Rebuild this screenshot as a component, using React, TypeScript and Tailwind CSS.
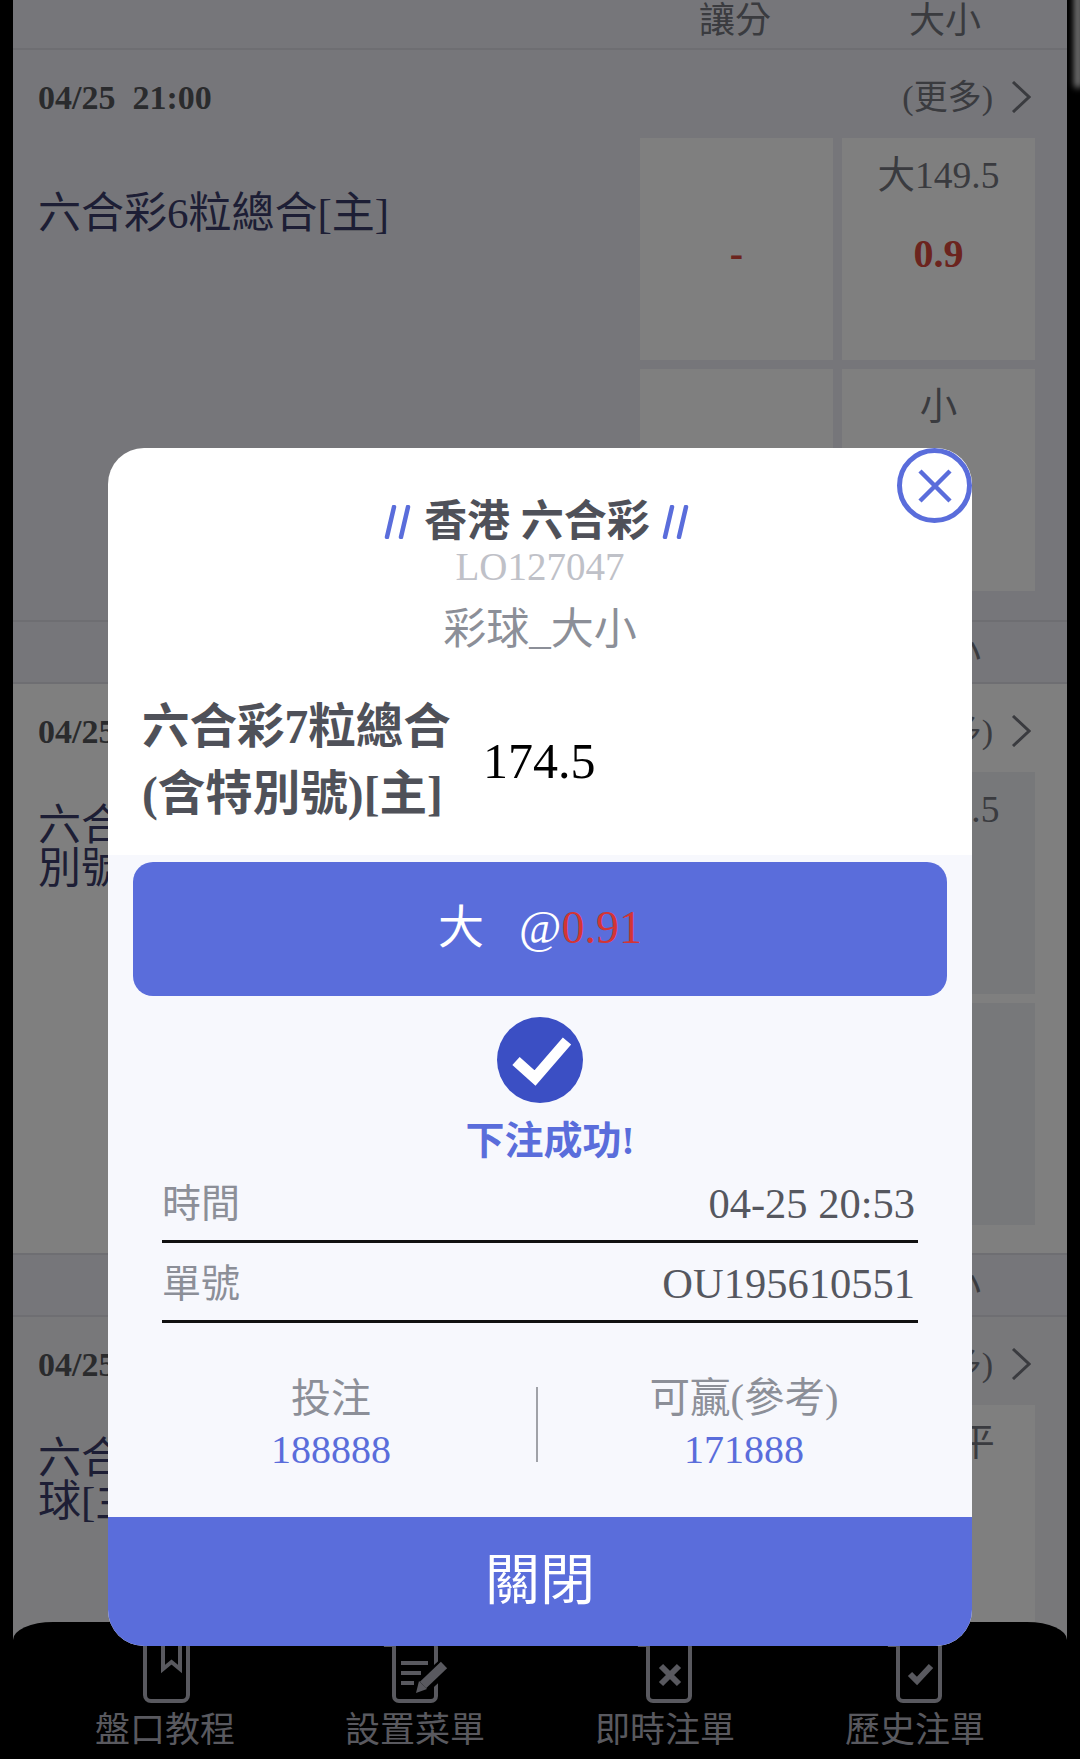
const ColumnHeader = ({ top }: { top?: boolean }) => (
    <div className={`flex justify-end pr-[17px] text-[36px] text-[#74767f] ${top ? "h-[50px] border-b-2 items-end" : "h-[64px] border-y-2 items-center"} border-[#dcdde5] bg-[#ecedf4]`}>
        <span className={`w-[210px] text-center leading-[40px] ${top ? "mb-[7px]" : ""}`}>讓分</span>
        <span className={`w-[210px] text-center leading-[40px] ${top ? "mb-[7px]" : ""}`}>大小</span>
    </div>
);

const Cell = ({ label, odds, bg }: { label?: string, odds?: string, bg: string }) => (
    <div className={`h-[222px] flex flex-col items-center text-[37.5px] text-[#74767f] ${bg}`}>
        <div className="h-[76px] flex items-center">{label}</div>
        <div className="h-[79px] flex items-center font-bold text-[40px] text-[#d8483c]">{odds}</div>
    </div>
);

const Section = ({ title, cells, bg, cellBg, pb }: { title: string, cells: { label?: string, odds?: string }[], bg: string, cellBg: string, pb: string }) => (
    <div className={`${bg} ${pb}`}>
        <div className="h-[88px] pt-[6px] pl-[25px] pr-[36px] flex items-center justify-between">
            <span className="font-bold text-[34px] text-[#55565a]">04/25&nbsp;&nbsp;21:00</span>
            <div className="flex items-center gap-[18px] text-[34px] text-[#74767f]">
                <span>(更多)</span>
                <svg width="20" height="32" viewBox="0 0 20 32" fill="none" stroke="#74767f" strokeWidth="3">
                    <path d="M2 1 L18 16 L2 31" />
                </svg>
            </div>
        </div>
        <div className="flex justify-between pl-[25px] pr-[32px]">
            <div className="w-[400px] h-[150px] flex items-center text-[43px] leading-[43px] text-[#3a3c6a]">{title}</div>
            <div className="w-[395px] grid grid-cols-2 gap-[9px]">
                {cells.map((c, i) => <Cell key={i} label={c.label} odds={c.odds} bg={cellBg} />)}
            </div>
        </div>
    </div>
);

const BookIcon = () => (
    <svg width="70" height="70" viewBox="0 0 70 70" fill="none" stroke="#b2b3be" strokeWidth="4">
        <rect x="15" y="5" width="43" height="61" rx="6" />
        <path d="M33 5 V34 L41.5 27 L50 34 V5" strokeWidth="4" />
    </svg>
);

const DocBody = ({ x }: { x: number }) => (
    <>
        <path d={`M${x} 7 H${x + 38} a5 5 0 0 1 5 5 V61 a5 5 0 0 1 -5 5 H${x + 6} a5 5 0 0 1 -5 -5 V9`} />
        <path d={`M${x + 2} 3 h-4 a7 7 0 0 0 -7 9 h11 z`} fill="#b2b3be" stroke="none" />
    </>
);

const PenDocIcon = () => (
    <svg width="70" height="70" viewBox="0 0 70 70" fill="none" stroke="#b2b3be" strokeWidth="4">
        <DocBody x={13} />
        <path d="M21 28 H48 M21 38 H41 M21 48 H34" strokeWidth="4" />
        <path d="M42 52 L66 30" stroke="#000" strokeWidth="16" />
        <path d="M43 50 L64 30" strokeWidth="9" />
        <path d="M36 58 L39 46 L47 54 Z" fill="#b2b3be" stroke="none" />
    </svg>
);

const CrossDocIcon = () => (
    <svg width="70" height="70" viewBox="0 0 70 70" fill="none" stroke="#b2b3be" strokeWidth="4">
        <DocBody x={17} />
        <path d="M31 31 L49 49 M49 31 L31 49" strokeWidth="6" />
    </svg>
);

const CheckDocIcon = () => (
    <svg width="70" height="70" viewBox="0 0 70 70" fill="none" stroke="#b2b3be" strokeWidth="4">
        <DocBody x={17} />
        <path d="M30 39 L37 46 L51 31" strokeWidth="6" />
    </svg>
);

const BottomNav = () => {
    const items = [
        { text: "盤口教程", icon: <BookIcon /> },
        { text: "設置菜單", icon: <PenDocIcon /> },
        { text: "即時注單", icon: <CrossDocIcon /> },
        { text: "歷史注單", icon: <CheckDocIcon /> },
    ];
    return (
        <div className="absolute left-[13px] right-[13px] bottom-0 h-[137px] pt-[13px] px-[27px] grid grid-cols-4 bg-black rounded-t-[40px_18px]">
            {items.map((item) => (
                <div key={item.text} className="flex flex-col items-center gap-[6px] text-[35px] leading-[40px] text-[#b2b3be]">
                    {item.icon}
                    <span>{item.text}</span>
                </div>
            ))}
        </div>
    );
};

const InfoRow = ({ label, value }: { label: string, value: string }) => (
    <div className="h-[80px] pt-[5px] flex items-center justify-between pr-[3px] border-b-[3px] border-[#111]">
        <span className="text-[39px] text-[#8c8f98]">{label}</span>
        <span className="text-[42.5px] text-[#55575f]">{value}</span>
    </div>
);

const Slashes = () => (
    <svg width="28" height="34" viewBox="0 0 28 34" fill="none" stroke="#5a6ddb" strokeWidth="4.5" strokeLinecap="round">
        <path d="M10 2 L3 32 M24 2 L17 32" />
    </svg>
);

const SuccessModal = () => (
    <div className="absolute inset-0 bg-black/50 pl-[108px] pt-[448px]">
        <div className="relative w-[864px] rounded-[36px] overflow-hidden bg-white">
            <button className="absolute top-0 right-0 w-[75px] h-[75px] rounded-full border-[5px] border-[#5a6ddb] bg-white flex items-center justify-center">
                <svg width="34" height="34" viewBox="0 0 34 34" fill="none" stroke="#5a6ddb" strokeWidth="4.5">
                    <path d="M2 2 L32 32 M32 2 L2 32" />
                </svg>
            </button>

            <div className="pt-[50px] h-[407px]">
                <div className="h-[48px] pr-[6px] flex items-center justify-center gap-[12px] font-bold text-[43px] text-[#4f5159]">
                    <Slashes />
                    <span>香港 六合彩</span>
                    <Slashes />
                </div>
                <div className="h-[42px] flex items-center justify-center text-[39px] text-[#bfc1c8]">LO127047</div>
                <div className="mt-[17px] h-[50px] flex items-center justify-center text-[43px] text-[#8c8f98]">彩球_大小</div>
                <div className="mt-[39px] pl-[34px] flex items-center">
                    <div className="w-[341px] font-bold text-[47.5px] leading-[67px] text-[#4f5159]">六合彩7粒總合<br />(含特別號)[主]</div>
                    <div className="text-[50px] text-black">174.5</div>
                </div>
            </div>

            <div className="bg-[#f7f8fd] h-[662px] pt-[7px]">
                <div className="mx-[25px] h-[134px] pb-[4px] rounded-[20px] bg-[#5a6ddb] flex items-center justify-center gap-[35px] text-[46px] text-white">
                    <span>大</span>
                    <span>@<span className="text-[#d33535]">0.91</span></span>
                </div>
                <svg className="mx-auto mt-[21px]" width="86" height="86" viewBox="0 0 86 86">
                    <circle cx="43" cy="43" r="43" fill="#3b4fc4" />
                    <path d="M19 44 L38 61 L70 24" fill="none" stroke="#fff" strokeWidth="11" />
                </svg>
                <div className="mt-[16px] h-[44px] pl-[20px] flex items-center justify-center font-bold text-[39px] text-[#5a6ddb]">下注成功!</div>
                <div className="mx-[54px]">
                    <InfoRow label="時間" value="04-25 20:53" />
                    <InfoRow label="單號" value="OU195610551" />
                </div>
                <div className="mt-[54px] ml-[18px] flex items-center">
                    <div className="w-[410px] flex flex-col items-center gap-[7px]">
                        <span className="h-[44px] leading-[44px] text-[40px] text-[#8c8f98]">投注</span>
                        <span className="h-[44px] leading-[44px] text-[40px] text-[#5a6ddb]">188888</span>
                    </div>
                    <div className="w-[2px] h-[75px] bg-[#a0a2a8]" />
                    <div className="w-[412px] flex flex-col items-center gap-[7px]">
                        <span className="h-[44px] leading-[44px] text-[40.5px] text-[#8c8f98]">可贏(參考)</span>
                        <span className="h-[44px] leading-[44px] text-[40px] text-[#5a6ddb]">171888</span>
                    </div>
                </div>
            </div>

            <div className="h-[129px] bg-[#5a6ddb] flex items-center justify-center text-[55px] text-white">關閉</div>
        </div>
    </div>
);

export default function App() {
    return (
        <div className="relative h-[1759px] w-[1080px] overflow-hidden bg-black [font-family:'Liberation_Serif','Noto_Sans_CJK_TC',serif]">
            <div className="mx-[13px]">
                <ColumnHeader top />
                <Section
                    title="六合彩6粒總合[主]"
                    bg="bg-[#ecedf4]"
                    cellBg="bg-white"
                    pb="pb-[29px]"
                    cells={[{ odds: "-" }, { label: "大149.5", odds: "0.9" }, { odds: "-" }, { label: "小", odds: "0.9" }]}
                />
                <ColumnHeader />
                <Section
                    title="六合彩7粒總合(含特別號)[主]"
                    bg="bg-white"
                    cellBg="bg-[#eff0f5]"
                    pb="pb-[28px]"
                    cells={[{ odds: "-" }, { label: "大174.5", odds: "0.91" }, { odds: "-" }, { label: "小", odds: "0.91" }]}
                />
                <ColumnHeader />
                <Section
                    title="六合彩特別號大小彩球[主]"
                    bg="bg-[#f0f0f5]"
                    cellBg="bg-white"
                    pb="pb-[27px]"
                    cells={[{ odds: "-" }, { label: "和局平", odds: "0.9" }]}
                />
            </div>
            <div className="absolute -right-[2px] -top-[12px] w-[8px] h-[100px] rounded-full bg-[#eee] blur-[3px]" />
            <BottomNav />
            <SuccessModal />
        </div>
    );
}
